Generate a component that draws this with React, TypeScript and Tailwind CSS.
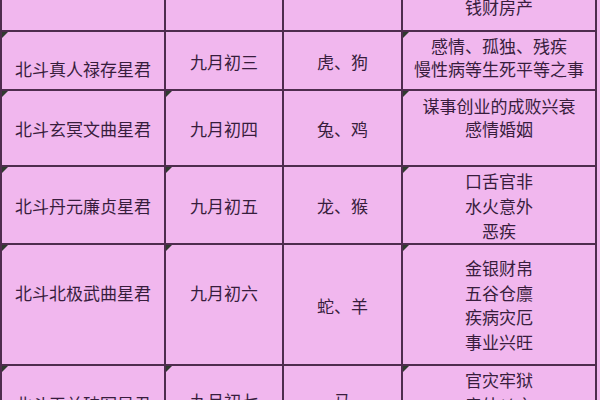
import React from "react";

const Tri = () => (
  <span className="absolute top-0 left-0 w-0 h-0 border-t-[6px] border-r-[6px] border-t-[#2f3a2f] border-r-transparent" />
);

type CellProps = { cls?: string; tri?: boolean; lh?: string; lines: string[] };

const Cell = ({ cls = "", tri = false, lh = "leading-[24px]", lines }: CellProps) => (
  <div className={`relative flex flex-col items-center justify-center bg-[#f1b7ee] text-center ${cls}`}>
    {tri && <Tri />}
    {lines.map((l, i) => (
      <div key={i} className={`whitespace-nowrap ${lh}`}>
        {l}
      </div>
    ))}
  </div>
);

export default function App() {
  return (
    <div
      className="w-[600px] h-[400px] overflow-hidden bg-[#f1b7ee] text-[#381d3d] text-[17px]"
      style={{ fontFamily: '"Noto Sans CJK SC", "Noto Sans", sans-serif' }}
    >
      <div className="mt-[-10px] w-[597px] grid grid-cols-[162px_116px_117px_192px] grid-rows-[40px_57px_74px_76px_119px_80px] gap-[2px] bg-[#4e2c4e] pl-[2px] pr-[2px]">
        {/* top partial row */}
        <Cell tri lines={[]} />
        <Cell lines={[]} />
        <Cell lines={[]} />
        <Cell tri cls="pb-[8px]" lh="leading-[25px]" lines={["钱财房产"]} />

        {/* row 1 */}
        <Cell tri cls="pt-[17px]" lines={["北斗真人禄存星君"]} />
        <Cell cls="pt-[2px]" lines={["九月初三"]} />
        <Cell cls="pt-[2px]" lines={["虎、狗"]} />
        <Cell tri cls="pb-[7px]" lh="leading-[23px]" lines={["感情、孤独、残疾", "慢性病等生死平等之事"]} />

        {/* row 2 */}
        <Cell tri cls="pt-[2px]" lines={["北斗玄冥文曲星君"]} />
        <Cell tri cls="pt-[2px]" lines={["九月初四"]} />
        <Cell cls="pt-[2px]" lines={["兔、鸡"]} />
        <Cell tri cls="pb-[22px]" lh="leading-[23px]" lines={["谋事创业的成败兴衰", "感情婚姻"]} />

        {/* row 3 */}
        <Cell tri cls="pt-[2px]" lines={["北斗丹元廉贞星君"]} />
        <Cell tri cls="pt-[2px]" lines={["九月初五"]} />
        <Cell cls="pt-[2px]" lines={["龙、猴"]} />
        <Cell tri lh="leading-[25px]" lines={["口舌官非", "水火意外", "恶疾"]} />

        {/* row 4 */}
        <Cell tri cls="pb-[24px]" lines={["北斗北极武曲星君"]} />
        <Cell tri cls="pb-[24px]" lines={["九月初六"]} />
        <Cell cls="pt-[2px]" lines={["蛇、羊"]} />
        <Cell tri cls="pt-[1px]" lh="leading-[24.5px]" lines={["金银财帛", "五谷仓廪", "疾病灾厄", "事业兴旺"]} />

        {/* row 5 */}
        <Cell tri cls="pb-[4px]" lines={["北斗天关破军星君"]} />
        <Cell tri cls="pb-[10px]" lines={["九月初七"]} />
        <Cell cls="pb-[10px]" lines={["马"]} />
        <Cell tri cls="pb-[28px]" lh="leading-[25px]" lines={["官灾牢狱", "意外凶灾"]} />
      </div>
    </div>
  );
}
